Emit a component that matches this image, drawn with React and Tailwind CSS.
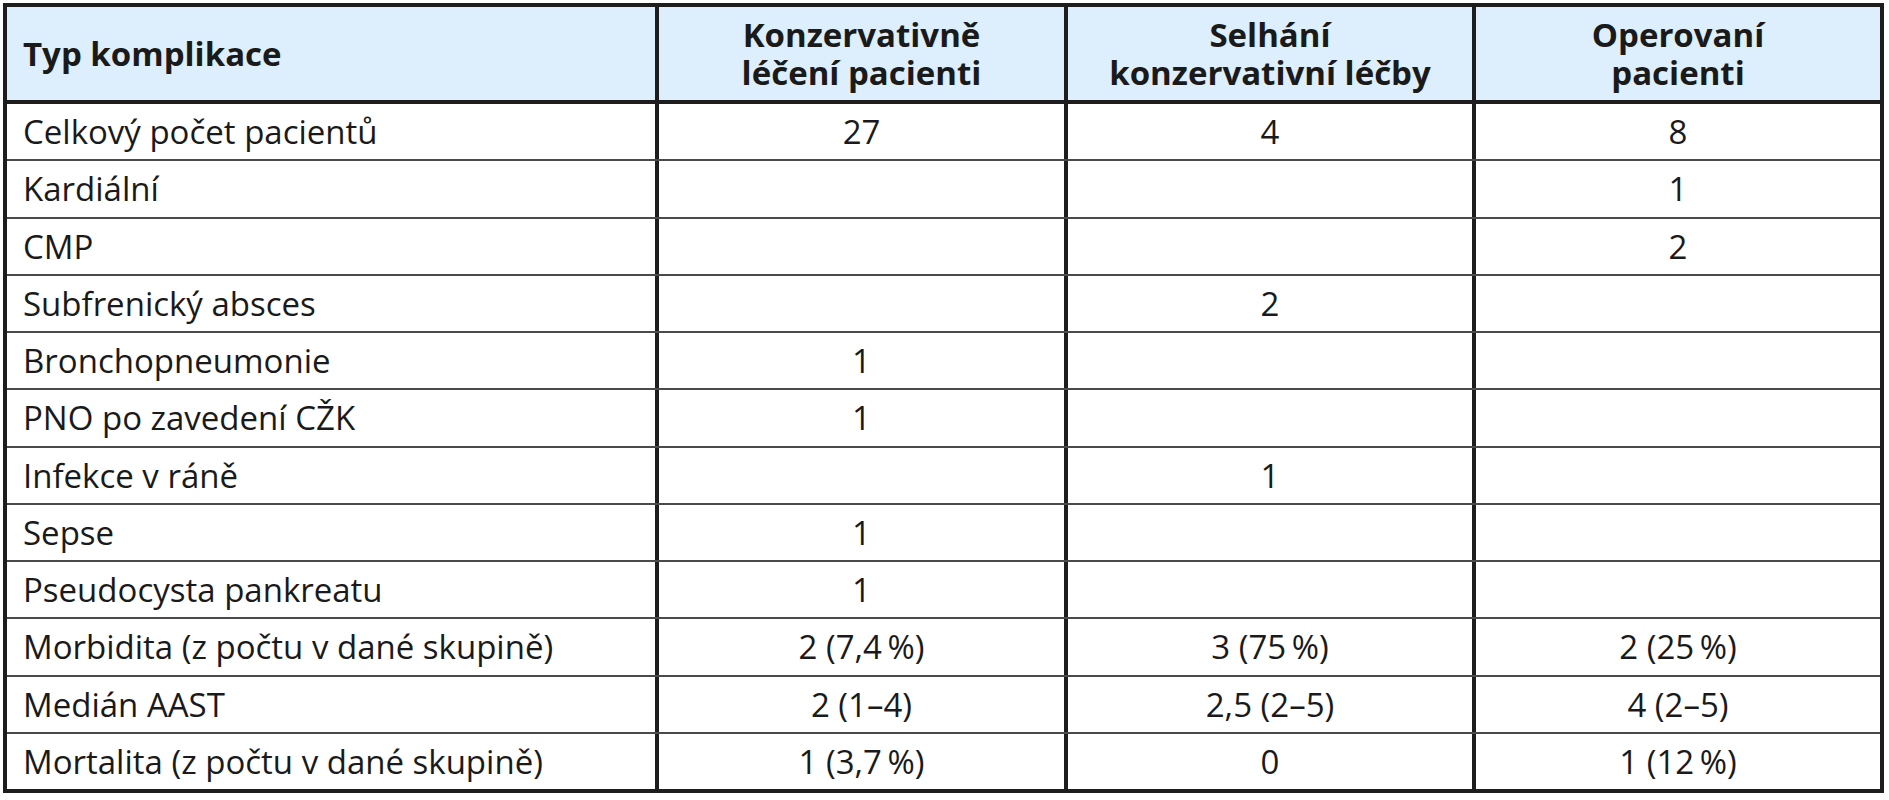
import React from "react";

const rows = [
  ["Celkový počet pacientů", "27", "4", "8"],
  ["Kardiální", "", "", "1"],
  ["CMP", "", "", "2"],
  ["Subfrenický absces", "", "2", ""],
  ["Bronchopneumonie", "1", "", ""],
  ["PNO po zavedení CŽK", "1", "", ""],
  ["Infekce v ráně", "", "1", ""],
  ["Sepse", "1", "", ""],
  ["Pseudocysta pankreatu", "1", "", ""],
  ["Morbidita (z počtu v dané skupině)", "2 (7,4\u2009%)", "3 (75\u2009%)", "2 (25\u2009%)"],
  ["Medián AAST", "2 (1–4)", "2,5 (2–5)", "4 (2–5)"],
  ["Mortalita (z počtu v dané skupině)", "1 (3,7\u2009%)", "0", "1 (12\u2009%)"],
];

const font = { fontFamily: '"Open Sans", "Noto Sans", sans-serif' };

export default function App() {
  return (
    <div className="bg-white w-[1889px] h-[800px] pt-[3px] pl-[3px]" style={font}>
      <div className="w-[1881px] h-[790px] border-4 border-[#1d1d1d] flex flex-col text-[#1a1a1a]">
        <div className="grid grid-cols-[648px_409px_408px_1fr] h-[97px] bg-[#ddeefc] border-b-4 border-[#1d1d1d] font-bold text-[33px] leading-[38px]">
          <div className="flex items-center pl-[16px]">Typ komplikace</div>
          <div className="flex items-center justify-center text-center border-l-4 border-[#1d1d1d]">
            Konzervativně<br />léčení pacienti
          </div>
          <div className="flex items-center justify-center text-center border-l-4 border-[#1d1d1d]">
            Selhání<br />konzervativní léčby
          </div>
          <div className="flex items-center justify-center text-center border-l-4 border-[#1d1d1d]">
            Operovaní<br />pacienti
          </div>
        </div>
        <div className="flex-1 flex flex-col">
          {rows.map((r, i) => (
            <div
              key={i}
              className={
                "flex-1 grid grid-cols-[648px_409px_408px_1fr] text-[33px] leading-none" +
                (i > 0 ? " border-t-2 border-[#4a4a4a]" : "")
              }
            >
              <div className="flex items-center pl-[16px]">{r[0]}</div>
              <div className="flex items-center justify-center border-l-4 border-[#1d1d1d]">{r[1]}</div>
              <div className="flex items-center justify-center border-l-4 border-[#1d1d1d]">{r[2]}</div>
              <div className="flex items-center justify-center border-l-4 border-[#1d1d1d]">{r[3]}</div>
            </div>
          ))}
        </div>
      </div>
    </div>
  );
}
